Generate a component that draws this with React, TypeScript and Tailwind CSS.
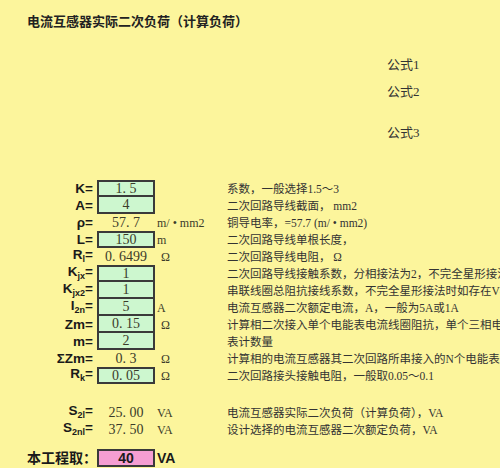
import React from "react";

type Row = {
  label: React.ReactNode;
  value: string;
  box?: "top" | "mid";
  unit?: string;
  unitPad?: boolean;
  desc: string;
};

const Sub = ({ children }: { children: React.ReactNode }) => (
  <span className="text-[9px] align-[-3px]">{children}</span>
);

const rows: Row[] = [
  { label: "K=", value: "1. 5", box: "top", desc: "系数，一般选择1.5～3" },
  { label: "A=", value: "4", box: "mid", desc: "二次回路导线截面， mm2" },
  { label: "ρ=", value: "57. 7", unit: "m/ • mm2", desc: "铜导电率，=57.7  (m/ • mm2)" },
  { label: "L=", value: "150", box: "top", unit: "m", desc: "二次回路导线单根长度，" },
  { label: <>R<Sub>l</Sub>=</>, value: "0. 6499", unit: "Ω", unitPad: true, desc: "二次回路导线电阻， Ω" },
  {
    label: <>K<Sub>jx</Sub>=</>,
    value: "1",
    box: "top",
    desc: "二次回路导线接触系数，分相接法为2，不完全星形接法为",
  },
  {
    label: <>K<Sub>jx2</Sub>=</>,
    value: "1",
    box: "mid",
    desc: "串联线圈总阻抗接线系数，不完全星形接法时如存在V相串",
  },
  { label: <>I<Sub>2n</Sub>=</>, value: "5", box: "mid", unit: "A", desc: "电流互感器二次额定电流，A，一般为5A或1A" },
  {
    label: "Zm=",
    value: "0. 15",
    box: "mid",
    unit: "Ω",
    unitPad: true,
    desc: "计算相二次接入单个电能表电流线圈阻抗，单个三相电子式",
  },
  { label: "m=", value: "2", box: "mid", desc: "表计数量" },
  {
    label: "ΣZm=",
    value: "0. 3",
    unit: "Ω",
    unitPad: true,
    desc: "计算相的电流互感器其二次回路所串接入的N个电能表电流",
  },
  { label: <>R<Sub>k</Sub>=</>, value: "0. 05", box: "top", unit: "Ω", unitPad: true, desc: "二次回路接头接触电阻，一般取0.05～0.1" },
];

const serif = "font-['Liberation_Serif','Noto_Sans_CJK_SC',serif]";
const sans = "font-['Liberation_Sans','Noto_Sans_CJK_SC',sans-serif]";

function DataRow({ row }: { row: Row }) {
  const boxCls =
    row.box === "top"
      ? "border-2 border-[#3a3a3a] bg-[#cdf7cf]"
      : row.box === "mid"
        ? "border-2 border-t-0 border-[#3a3a3a] bg-[#cdf7cf]"
        : "";
  return (
    <div className="flex h-[17px] items-center">
      <div
        className={`w-[97px] shrink-0 whitespace-nowrap pr-[4px] text-right text-[13.5px] font-bold leading-[17px] text-[#1a1a1a] ${sans}`}
      >
        {row.label}
      </div>
      <div
        className={`flex h-[17px] w-[58px] shrink-0 items-center justify-center text-[14px] leading-none text-[#3b3b2a] ${serif} ${boxCls}`}
      >
        {row.value}
      </div>
      <div
        className={`w-[72px] shrink-0 whitespace-nowrap text-[12px] text-[#3b3b2a] ${serif} ${row.unitPad ? "pl-[6px]" : "pl-[2px]"}`}
      >
        {row.unit}
      </div>
      <div className={`min-w-0 flex-1 whitespace-nowrap pt-[3px] text-[11.5px] text-[#333] ${serif}`}>{row.desc}</div>
    </div>
  );
}

export default function App() {
  return (
    <div className="h-[468px] w-[500px] overflow-hidden bg-[#fcf59c]">
      <div className={`pl-[27px] pt-[14px] text-[13px] font-bold leading-[16px] text-[#222] ${sans}`}>
        电流互感器实际二次负荷（计算负荷）
      </div>

      <div className={`pl-[387px] text-[13px] leading-[16px] text-[#333] ${serif}`}>
        <div className="mt-[27px]">公式1</div>
        <div className="mt-[11px]">公式2</div>
        <div className="mt-[25px]">公式3</div>
      </div>

      <div className="mt-[39px] flex flex-col">
        {rows.map((r, i) => (
          <DataRow key={i} row={r} />
        ))}
      </div>

      <div className="mt-[20px] flex flex-col">
        {[
          { label: <>S<Sub>2l</Sub>=</>, value: "25. 00", desc: "电流互感器实际二次负荷（计算负荷），VA" },
          { label: <>S<Sub>2nl</Sub>=</>, value: "37. 50", desc: "设计选择的电流互感器二次额定负荷，VA" },
        ].map((r, i) => (
          <div key={i} className="flex h-[17px] items-center">
            <div
              className={`w-[97px] shrink-0 whitespace-nowrap pr-[4px] text-right text-[13.5px] font-bold leading-[17px] text-[#1a1a1a] ${sans}`}
            >
              {r.label}
            </div>
            <div className={`w-[58px] shrink-0 text-center text-[14px] text-[#3b3b2a] ${serif}`}>{r.value}</div>
            <div className={`w-[72px] shrink-0 pl-[2px] text-[12px] text-[#3b3b2a] ${serif}`}>VA</div>
            <div className={`min-w-0 flex-1 whitespace-nowrap pt-[3px] text-[11.5px] text-[#333] ${serif}`}>
              {r.desc}
            </div>
          </div>
        ))}
      </div>

      <div className="mt-[11px] flex h-[18px] items-center">
        <div className={`w-[97px] shrink-0 whitespace-nowrap pl-[27px] text-[14px] font-bold text-[#1a1a1a] ${sans}`}>
          本工程取：
        </div>
        <div
          className={`flex h-[18px] w-[58px] shrink-0 items-center justify-center border-2 border-[#3a3a3a] bg-[#f59ed2] text-[14px] font-bold text-[#1a1a1a] ${sans}`}
        >
          40
        </div>
        <div className={`pl-[2px] text-[14px] font-bold text-[#1a1a1a] ${sans}`}>VA</div>
      </div>
    </div>
  );
}
